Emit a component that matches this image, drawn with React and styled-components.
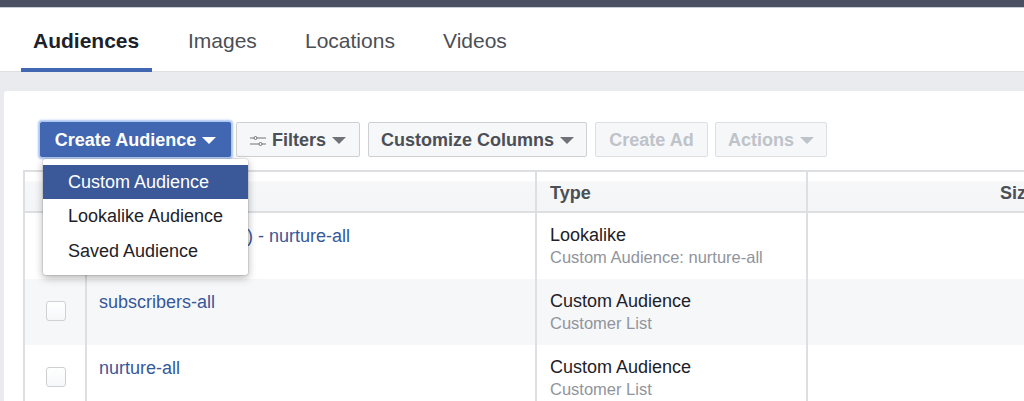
import React from 'react'
import styled, { createGlobalStyle } from 'styled-components'

const GlobalStyle = createGlobalStyle`
  html, body {
    margin: 0;
    padding: 0;
    width: 1024px;
    height: 401px;
    overflow: hidden;
    background: #e9ebee;
    font-family: "Liberation Sans", Arial, sans-serif;
    -webkit-font-smoothing: antialiased;
  }
`

const TopBar = styled.div`
  height: 7px;
  background: #4b5162;
  border-bottom: 1px solid #c9ccd3;
`

const TabBar = styled.div`
  display: flex;
  height: 64px;
  padding-left: 21px;
  background: #fff;
  border-bottom: 1px solid #dddfe2;
  box-sizing: border-box;
`

const Tab = styled.div`
  display: flex;
  align-items: center;
  box-sizing: border-box;
  height: 64px;
  width: ${p => p.$width}px;
  padding: 6px 0 0 ${p => p.$pad}px;
  font-size: 21px;
  font-weight: ${p => (p.$active ? 700 : 400)};
  color: ${p => (p.$active ? '#1d2129' : '#4b4f56')};
  border-bottom: 4px solid ${p => (p.$active ? '#4267b2' : 'transparent')};
`

const Card = styled.div`
  margin: 19px 0 0 4px;
  padding: 31px 0 0 19px;
  height: 400px;
  background: #fff;
  border-radius: 3px 0 0 0;
`

const Toolbar = styled.div`
  position: relative;
  display: flex;
  height: 35px;
  padding-left: 17px;
`

const Button = styled.div`
  display: flex;
  align-items: center;
  justify-content: center;
  gap: 6px;
  box-sizing: border-box;
  width: ${p => p.$width}px;
  height: 35px;
  margin-right: ${p => p.$gap}px;
  padding-top: 2px;
  font-size: 18px;
  font-weight: 700;
  white-space: nowrap;
  color: ${p => (p.$disabled ? '#bec3c9' : '#4b4f56')};
  background: #f6f7f9;
  border: 1px solid ${p => (p.$disabled ? '#dddfe2' : '#ced0d4')};
  border-radius: 2px;
`

const PrimaryButton = styled(Button)`
  color: #fff;
  background: #4267b2;
  border-color: #4267b2;
  box-shadow: 0 0 2px 2px #a9c4f5;
`

const Caret = styled.span`
  width: 0;
  height: 0;
  border-left: 7px solid transparent;
  border-right: 7px solid transparent;
  border-top: 7px solid ${p => p.$color};
`

const Menu = styled.div`
  position: absolute;
  z-index: 2;
  top: 37px;
  left: 20px;
  width: 205px;
  padding: 6px 0 7px;
  background: #fff;
  border-radius: 3px;
  box-shadow: 0 0 0 1px rgba(0, 0, 0, 0.08), 0 3px 9px rgba(0, 0, 0, 0.3);
`

const MenuItem = styled.div`
  height: 34.4px;
  line-height: 35px;
  padding-left: 25px;
  font-size: 18px;
  color: ${p => (p.$selected ? '#fff' : '#1d2129')};
  background: ${p => (p.$selected ? '#3b5998' : 'transparent')};
`

const Table = styled.div`
  width: 1011px;
  margin-top: 13px;
  border-top: 2px solid #dddfe2;
  border-left: 2px solid #dddfe2;
`

const Row = styled.div`
  display: grid;
  grid-template-columns: 60px 450px 271px 1fr;
  height: 66px;
  background: ${p => (p.$shaded ? '#f6f7f9' : '#fff')};
`

const HeaderRow = styled(Row)`
  box-sizing: border-box;
  height: 41px;
  background: linear-gradient(#fff 0, #fff 9px, #f6f7f9 10px, #f4f5f6 100%);
  border-bottom: 2px solid #dddfe2;
`

const HeaderCell = styled.div`
  display: flex;
  align-items: center;
  justify-content: ${p => (p.$right ? 'flex-end' : 'flex-start')};
  padding: 3px 0 0 13px;
  font-size: 18px;
  font-weight: 700;
  color: #4b4f56;
  border-left: ${p => (p.$first ? 'none' : '2px solid #dddfe2')};
`

const CheckCell = styled.div`
  padding: 22px 0 0 21px;
`

const Checkbox = styled.div`
  box-sizing: border-box;
  width: 20px;
  height: 20px;
  background: linear-gradient(#fff, #f6f7f9);
  border: 1px solid #ced0d4;
  border-radius: 3px;
`

const Cell = styled.div`
  padding: 13px 0 0 12px;
  border-left: 2px solid #dddfe2;
`

const TypeCell = styled(Cell)`
  padding: 12px 0 0 13px;
`

const NameLink = styled.div`
  font-size: 18px;
  line-height: 20px;
  color: #365899;
  white-space: nowrap;
`

const TypeName = styled.div`
  font-size: 18px;
  line-height: 21px;
  color: #1d2129;
`

const TypeSub = styled.div`
  font-size: 16.5px;
  line-height: 22px;
  color: #90949c;
`

const rows = [
  { name: 'Lookalike (US, 1%) - nurture-all', type: 'Lookalike', sub: 'Custom Audience: nurture-all' },
  { name: 'subscribers-all', type: 'Custom Audience', sub: 'Customer List', shaded: true },
  { name: 'nurture-all', type: 'Custom Audience', sub: 'Customer List' },
]

const App = () => (
  <>
    <GlobalStyle />
    <TopBar />
    <TabBar>
      <Tab $active $width={131} $pad={12}>Audiences</Tab>
      <Tab $width={117} $pad={36}>Images</Tab>
      <Tab $width={138} $pad={36}>Locations</Tab>
      <Tab $width={100} $pad={36}>Videos</Tab>
    </TabBar>
    <Card>
      <Toolbar>
        <PrimaryButton $width={191} $gap={5}>Create Audience <Caret $color="#fff" /></PrimaryButton>
        <Button $width={124} $gap={8}>
          <svg width="16" height="12" viewBox="0 0 16 12" fill="none" stroke="#6f7379" strokeWidth="1">
            <path d="M0 3h4M7 3h9M0 9h9M12 9h4" />
            <circle cx="5.5" cy="3" r="1.5" />
            <circle cx="10.5" cy="9" r="1.5" />
          </svg>
          Filters <Caret $color="#6f7379" />
        </Button>
        <Button $width={219} $gap={8}>Customize Columns <Caret $color="#6f7379" /></Button>
        <Button $width={113} $gap={7} $disabled>Create Ad</Button>
        <Button $width={112} $gap={0} $disabled>Actions <Caret $color="#bec3c9" /></Button>
        <Menu>
          <MenuItem $selected>Custom Audience</MenuItem>
          <MenuItem>Lookalike Audience</MenuItem>
          <MenuItem>Saved Audience</MenuItem>
        </Menu>
      </Toolbar>
      <Table>
        <HeaderRow>
          <HeaderCell $first />
          <HeaderCell />
          <HeaderCell>Type</HeaderCell>
          <HeaderCell $right>Size</HeaderCell>
        </HeaderRow>
        {rows.map(row => (
          <Row key={row.name} $shaded={row.shaded}>
            <CheckCell><Checkbox /></CheckCell>
            <Cell><NameLink>{row.name}</NameLink></Cell>
            <TypeCell>
              <TypeName>{row.type}</TypeName>
              <TypeSub>{row.sub}</TypeSub>
            </TypeCell>
            <Cell />
          </Row>
        ))}
      </Table>
    </Card>
  </>
)

export default App
